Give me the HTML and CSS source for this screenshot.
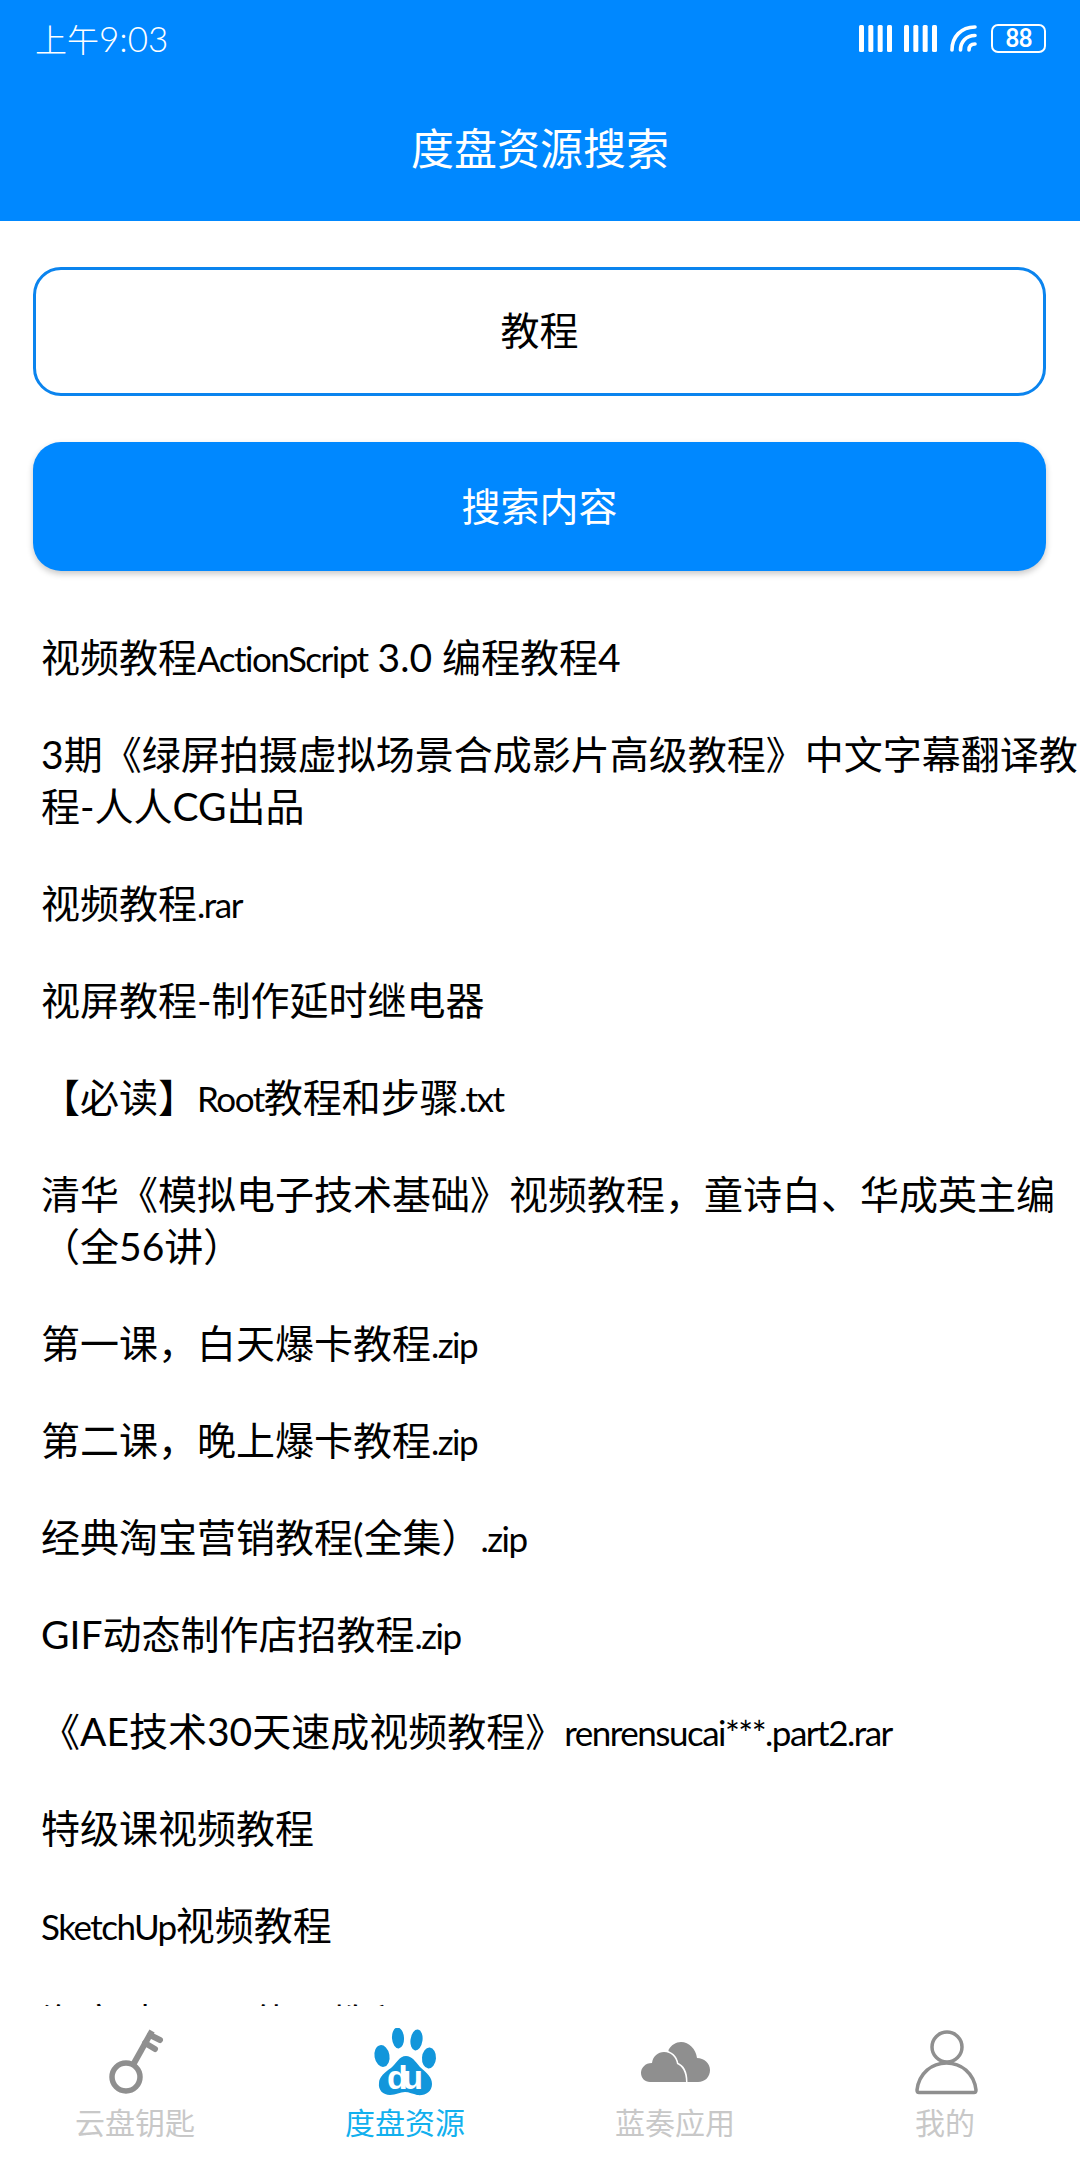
FILE: index.html
```html
<!DOCTYPE html>
<html lang="zh-CN">
<head>
<meta charset="utf-8">
<title>度盘资源搜索</title>
<link rel="stylesheet" href="styles.css">
</head>
<body>
<div class="app">
  <header class="header">
    <div class="status">
      <span class="time">上午<span class="time-num">9:03</span></span>
      <div class="status-icons">
        <svg class="sig" width="33" height="27" viewBox="0 0 33 27"><g fill="#fff"><rect x="0" y="0" width="5" height="27" rx="1.500"/><rect x="9.330" y="0" width="5" height="27" rx="1.500"/><rect x="18.670" y="0" width="5" height="27" rx="1.500"/><rect x="28" y="0" width="5" height="27" rx="1.500"/></g></svg>
        <svg class="sig" width="33" height="27" viewBox="0 0 33 27"><g fill="#fff"><rect x="0" y="0" width="5" height="27" rx="1.500"/><rect x="9.330" y="0" width="5" height="27" rx="1.500"/><rect x="18.670" y="0" width="5" height="27" rx="1.500"/><rect x="28" y="0" width="5" height="27" rx="1.500"/></g></svg>
        <svg class="wifi" width="27" height="27" viewBox="0 0 27 27"><g fill="none" stroke="#fff" stroke-width="3.600" stroke-linecap="round"><path d="M2 25C2 12 11 2 25 2"/><path d="M10.500 25C10.500 17 16 10.500 25 10.500"/><path d="M19 25C19 21.500 21 19 25 19"/></g></svg>
        <span class="battery">88</span>
      </div>
    </div>
    <h1 class="title">度盘资源搜索</h1>
  </header>
  <main class="content">
    <div class="input">教程</div>
    <div class="button">搜索内容</div>
    <ul class="list">
      <li>视频教程<span class="lat">ActionScript</span><span class="cap"> 3.0 </span>编程教程<span class="cap">4</span></li>
      <li><span class="cap">3</span>期《绿屏拍摄虚拟场景合成影片高级教程》中文字幕翻译教程<span class="cap">-</span>人人<span class="cap">CG</span>出品</li>
      <li>视频教程<span class="lat">.rar</span></li>
      <li>视屏教程<span class="cap">-</span>制作延时继电器</li>
      <li>【必读】<span class="lat">Root</span>教程和步骤<span class="lat">.txt</span></li>
      <li>清华《模拟电子技术基础》视频教程，童诗白、华成英主编（全<span class="cap">56</span>讲）</li>
      <li>第一课，白天爆卡教程<span class="lat">.zip</span></li>
      <li>第二课，晚上爆卡教程<span class="lat">.zip</span></li>
      <li>经典淘宝营销教程<span class="cap">(</span>全集）<span class="lat">.zip</span></li>
      <li><span class="cap">GIF</span>动态制作店招教程<span class="lat">.zip</span></li>
      <li>《<span class="cap">AE</span>技术<span class="cap">30</span>天速成视频教程》<span class="lat">renrensucai***.part2.rar</span></li>
      <li>特级课视频教程</li>
      <li><span class="lat">SketchUp</span>视频教程</li>
      <li>淘宝助理<span class="cap">5.0</span>使用教程</li>
    </ul>
  </main>
  <nav class="tabs">
    <div class="tab">
      <svg width="70" height="70" viewBox="0 0 70 70"><g fill="none" stroke="#8f8f8f" stroke-width="5.500"><circle cx="26" cy="49" r="14"/><path d="M33 37L52 3" stroke-width="6"/><path d="M50 7L60 12M45 15L55 21" stroke-width="6" stroke-linecap="round"/></g></svg>
      <span class="tab-label">云盘钥匙</span>
    </div>
    <div class="tab active">
      <svg width="70" height="70" viewBox="0 0 70 70"><g fill="#1296db"><ellipse cx="12" cy="28" rx="7.500" ry="11" transform="rotate(-10 12 28)"/><ellipse cx="28" cy="10" rx="6" ry="10.500" transform="rotate(-4 28 10)"/><ellipse cx="46.500" cy="12" rx="6" ry="10.500" transform="rotate(8 46.500 12)"/><ellipse cx="59" cy="30" rx="7" ry="10.500" transform="rotate(4 59 30)"/><path d="M36 28C42 28 45 33 50 39C57 45 62 49 62 56C62 64 55 68 47 67C43 66 39 64 35 64C30 64 26 67 20 67C13 67 8 62 9 55C9 49 15 44 21 40C27 35 29 28 36 28Z"/></g><text class="du" x="17" y="61" textLength="36">du</text></svg>
      <span class="tab-label">度盘资源</span>
    </div>
    <div class="tab">
      <svg width="70" height="70" viewBox="0 0 70 70"><path fill="#8f8f8f" d="M28.500 22C31 17 36 14 41 14C49 14 56 21 57 30C64 30 70 35 70 42C70 49 65 54 58 54H30Z"/><path fill="#8f8f8f" stroke="#fff" stroke-width="3" paint-order="stroke" d="M10 54C5 54 1 50 1 45C1 40 5 35 12 35C13 28 18 24 24 24C31 24 36 29 37 36C42 38 46 44 46 54Z"/></svg>
      <span class="tab-label">蓝奏应用</span>
    </div>
    <div class="tab">
      <svg width="70" height="70" viewBox="0 0 70 70"><g fill="none" stroke="#8f8f8f" stroke-width="3.500"><circle cx="37" cy="19" r="15"/><path stroke-linejoin="round" d="M7 62C9 45 22 35 36.500 35C51 35 64 45 66 62C66 64 65 64.500 64 64.500H9C8 64.500 7 64 7 62Z"/></g></svg>
      <span class="tab-label">我的</span>
    </div>
  </nav>
</div>
</body>
</html>
```
FILE: styles.css
```css
* { box-sizing: border-box; margin: 0; padding: 0; }
html, body { width: 1080px; height: 2160px; overflow: hidden; background: #fff; }
body { font-family: "Noto Sans CJK SC", sans-serif; color: #000; }
.app { display: flex; flex-direction: column; width: 1080px; height: 2160px; }
.header { height: 221px; background: #0088ff; color: #fff; flex: none; }
.status { display: flex; justify-content: space-between; align-items: center; height: 76px; padding: 0 34px 0 35px; }
.time { font-size: 32px; font-weight: 300; line-height: 76px; }
.time-num { font-family: Lato, sans-serif; font-size: 35px; font-weight: 300; }
.status-icons { display: flex; align-items: center; gap: 12px; }
.status-icons svg { display: block; }
.wifi { margin-left: 1px; margin-right: 2px; }
.battery { display: flex; align-items: center; justify-content: center; width: 55px; height: 29px; border: 2.500px solid #fff; border-radius: 7px; font-family: Roboto, sans-serif; font-size: 25px; font-weight: 500; letter-spacing: -1px; line-height: 1; }
.title { height: 145px; padding-bottom: 5px; display: flex; align-items: center; justify-content: center; font-size: 43px; font-weight: 400; }
.content { flex: 1; min-height: 0; overflow: hidden; padding-top: 46px; display: flex; flex-direction: column; }
.input { height: 129px; flex: none; margin: 0 34px 0 33px; border: 3px solid #0b84ee; border-radius: 28px; padding-bottom: 8px; display: flex; align-items: center; justify-content: center; font-size: 39px; }
.button { height: 129px; flex: none; margin: 46px 34px 0 33px; padding-bottom: 5px; background: #0088ff; border-radius: 28px; color: #fff; display: flex; align-items: center; justify-content: center; font-size: 39px; box-shadow: 0 3px 6px rgba(0,0,0,.22); }
.list { list-style: none; margin-top: 58px; padding: 0 0 0 41px; }
.list li { font-size: 39px; line-height: 52px; margin-bottom: 45px; }
.lat { font-family: Lato, sans-serif; font-size: 35px; letter-spacing: -1.500px; line-height: 0; }
.cap { font-family: Lato, sans-serif; font-size: 39px; line-height: 0; }
.tabs { flex: none; height: 154px; background: #fff; display: grid; grid-template-columns: repeat(4, 270px); }
.tab { display: flex; flex-direction: column; align-items: center; padding-top: 22px; color: #c8c8c8; }
.tab svg { display: block; }
.tab-label { font-size: 30px; line-height: 36px; margin-top: 5px; }
.tab.active .tab-label { color: #12b0ee; }
.du { font-family: "Liberation Sans", sans-serif; font-size: 34px; font-weight: 700; fill: #fff; }
```
